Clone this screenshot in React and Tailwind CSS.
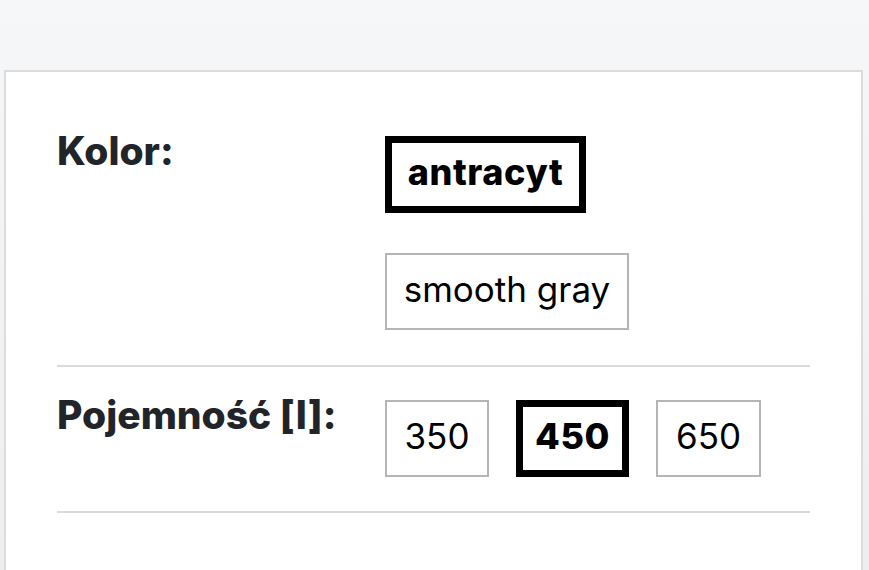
const Opt = ({ children, active, w }) => (
  <div
    className={
      active
        ? `${w} h-[77px] flex items-center justify-center pb-[5px] border-[7px] border-black font-extrabold tracking-[0.6px] text-[36px] text-black`
        : `${w} h-[77px] flex items-center justify-center pb-[5px] border-2 border-[#b5b5b5] text-[35px] text-black`
    }
  >
    {children}
  </div>
)

const Row = ({ label, children }) => (
  <div className="flex">
    <div className="w-[328px] shrink-0 text-[39px] leading-none font-extrabold text-[#212529] mt-[-5px]">{label}</div>
    <div className="flex-1">{children}</div>
  </div>
)

export default function App() {
  return (
    <div
      className="h-[570px] overflow-hidden bg-gradient-to-b from-[#f6f7f8] to-[#eceef0] pt-[70px] pl-[4px] pr-[6px]"
      style={{ fontFamily: 'Inter, "Noto Sans", sans-serif' }}
    >
      <div className="h-[600px] bg-white border-2 border-[#dcdcdc] px-[51px] pt-[64px]">
        <Row label="Kolor:">
          <div className="flex flex-col items-start gap-[40px]">
            <Opt active w="w-[201px]">antracyt</Opt>
            <Opt w="w-[244px]">smooth gray</Opt>
          </div>
        </Row>
        <div className="h-[2px] bg-[#dadada] mt-[35px] mb-[33px]" />
        <Row label="Pojemność [l]:">
          <div className="flex items-start gap-[27px]">
            <Opt w="w-[104px]">350</Opt>
            <Opt active w="w-[113px]">450</Opt>
            <Opt w="w-[105px]">650</Opt>
          </div>
        </Row>
        <div className="h-[2px] bg-[#dadada] mt-[34px]" />
      </div>
    </div>
  )
}
